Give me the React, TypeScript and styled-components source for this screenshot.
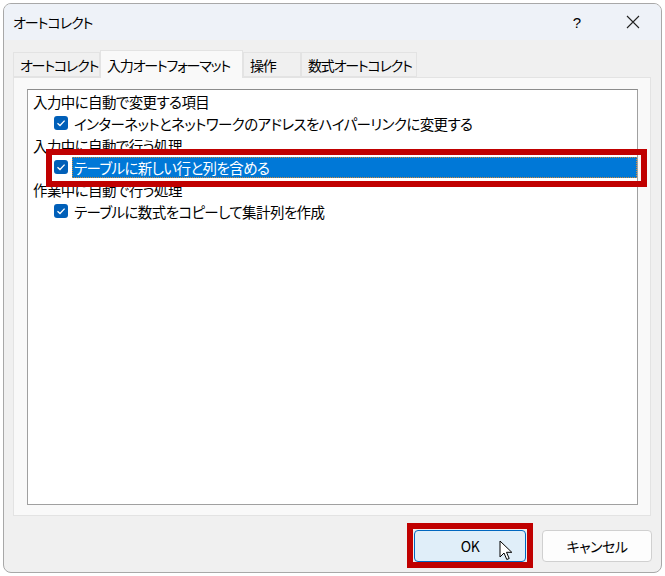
import styled, { createGlobalStyle } from "styled-components";

const GlobalStyle = createGlobalStyle`
  html, body {
    margin: 0;
    padding: 0;
    background: #ffffff;
  }
  body {
    font-family: "Noto Sans CJK JP", "Noto Sans", sans-serif;
    font-feature-settings: "palt";
    color: #000;
  }
`;

const Page = styled.div`
  width: 665px;
  height: 576px;
  padding: 3px 0 0 3px;
  box-sizing: border-box;
`;

const Window = styled.div`
  width: 659px;
  height: 570px;
  box-sizing: border-box;
  border: 1px solid #a8a8a8;
  border-radius: 8px;
  overflow: hidden;
  background: #f0f0f0;
  display: flex;
  flex-direction: column;
`;

const TitleBar = styled.div`
  height: 36px;
  flex: none;
  background: #eef2f8;
  display: flex;
  align-items: center;
  padding-left: 9px;
  font-size: 14px;
  letter-spacing: -1px;
`;

const Title = styled.span`
  flex: 1;
`;

const TitleButton = styled.div`
  width: 56px;
  height: 36px;
  display: flex;
  align-items: center;
  justify-content: center;
  font-family: "Liberation Sans", Arial, sans-serif;
  font-size: 15px;
  letter-spacing: 0;
`;

const Body = styled.div`
  flex: 1;
  display: flex;
  flex-direction: column;
  padding: 10px 9px 0 9px;
`;

const TabStrip = styled.div`
  display: flex;
  align-items: flex-end;
  height: 27px;
`;

const Tab = styled.div<{ $active?: boolean; $w: number }>`
  box-sizing: border-box;
  width: ${(p) => p.$w}px;
  height: ${(p) => (p.$active ? "28px" : "25px")};
  margin-bottom: ${(p) => (p.$active ? "-1px" : "0")};
  padding: 0 0 0 6px;
  display: flex;
  align-items: center;
  white-space: nowrap;
  font-size: 14px;
  letter-spacing: -1.2px;
  background: ${(p) => (p.$active ? "#f9f9f9" : "#f0f0f0")};
  border: 1px solid #e3e3e3;
  border-bottom: ${(p) => (p.$active ? "none" : "1px solid #e3e3e3")};
  position: relative;
  z-index: ${(p) => (p.$active ? 1 : 0)};
`;

const Panel = styled.div`
  box-sizing: border-box;
  width: 638px;
  height: 439px;
  background: #f9f9f9;
  border: 1px solid #e3e3e3;
  padding: 11px 12px 10px 13px;
  display: flex;
`;

const ListBox = styled.div`
  flex: 1;
  background: #fff;
  border: 1px solid #a0a0a0;
  border-top-color: #8c8c8c;
  display: flex;
  flex-direction: column;
  position: relative;
`;

const Row = styled.div<{ $indent?: boolean }>`
  height: 22px;
  display: flex;
  align-items: center;
  padding-left: ${(p) => (p.$indent ? "26px" : "5px")};
  font-size: 14.5px;
  letter-spacing: -0.6px;
  position: relative;
  white-space: nowrap;
`;

const Check = styled.span`
  width: 14px;
  height: 14px;
  flex: none;
  border-radius: 3px;
  background: #005fb8;
  display: flex;
  align-items: center;
  justify-content: center;
  margin-right: 4px;
`;

const Label = styled.span<{ $selected?: boolean }>`
  flex: ${(p) => (p.$selected ? 1 : "none")};
  height: 21px;
  display: flex;
  align-items: center;
  padding-left: 2px;
  box-sizing: border-box;
  background: ${(p) => (p.$selected ? "#0078d7" : "transparent")};
  color: ${(p) => (p.$selected ? "#fff" : "#000")};
  outline: ${(p) => (p.$selected ? "1px dotted #d08a3a" : "none")};
  outline-offset: -1px;
`;

const RedFrame = styled.div`
  position: absolute;
  border: 6px solid #c00000;
  pointer-events: none;
  z-index: 2;
`;

const RowFrame = styled(RedFrame)`
  left: 18px;
  right: -10px;
  top: -7px;
  bottom: -9px;
`;

const Footer = styled.div`
  display: flex;
  justify-content: flex-end;
  gap: 16px;
  padding: 14px 0 0 0;
`;

const Button = styled.div<{ $primary?: boolean }>`
  box-sizing: border-box;
  width: ${(p) => (p.$primary ? "112px" : "110px")};
  height: 32px;
  border-radius: 4px;
  display: flex;
  align-items: center;
  justify-content: center;
  font-size: 14px;
  letter-spacing: -0.5px;
  position: relative;
  background: ${(p) => (p.$primary ? "#e0eef9" : "#fdfdfd")};
  border: 1px solid ${(p) => (p.$primary ? "#0067c0" : "#d0d0d0")};
`;

const ButtonFrame = styled(RedFrame)`
  left: -8px;
  right: -8px;
  top: -8px;
  bottom: -7px;
`;

const Cursor = styled.svg`
  position: absolute;
  left: 84px;
  top: 9px;
  z-index: 3;
`;

const Tick = () => (
  <svg width="10" height="8" viewBox="0 0 10 8">
    <path d="M1.5 4.2 L4 6.5 L8.6 1.6" fill="none" stroke="#fff" strokeWidth="1.3" />
  </svg>
);

export default function App() {
  return (
    <Page>
      <GlobalStyle />
      <Window>
        <TitleBar>
          <Title>オートコレクト</Title>
          <TitleButton>?</TitleButton>
          <TitleButton>
            <svg width="14" height="14" viewBox="0 0 14 14">
              <path d="M1 1 L13 13 M13 1 L1 13" stroke="#222" strokeWidth="1.1" />
            </svg>
          </TitleButton>
        </TitleBar>
        <Body>
          <TabStrip>
            <Tab $w={87}>オートコレクト</Tab>
            <Tab $active $w={143}>入力オートフォーマット</Tab>
            <Tab $w={58}>操作</Tab>
            <Tab $w={116}>数式オートコレクト</Tab>
          </TabStrip>
          <Panel>
            <ListBox>
              <Row>入力中に自動で変更する項目</Row>
              <Row $indent>
                <Check><Tick /></Check>
                <Label>インターネットとネットワークのアドレスをハイパーリンクに変更する</Label>
              </Row>
              <Row>入力中に自動で行う処理</Row>
              <Row $indent>
                <Check><Tick /></Check>
                <Label $selected>テーブルに新しい行と列を含める</Label>
                <RowFrame />
              </Row>
              <Row>作業中に自動で行う処理</Row>
              <Row $indent>
                <Check><Tick /></Check>
                <Label>テーブルに数式をコピーして集計列を作成</Label>
              </Row>
            </ListBox>
          </Panel>
          <Footer>
            <Button $primary>
              OK
              <ButtonFrame />
              <Cursor width="14" height="22" viewBox="0 0 14 22">
                <path
                  d="M1 1 L1 17 L5 13 L7.8 19.5 L10.2 18.5 L7.5 12.3 L12.8 12.3 Z"
                  fill="#fff"
                  stroke="#000"
                  strokeWidth="1"
                  strokeLinejoin="round"
                />
              </Cursor>
            </Button>
            <Button>キャンセル</Button>
          </Footer>
        </Body>
      </Window>
    </Page>
  );
}
